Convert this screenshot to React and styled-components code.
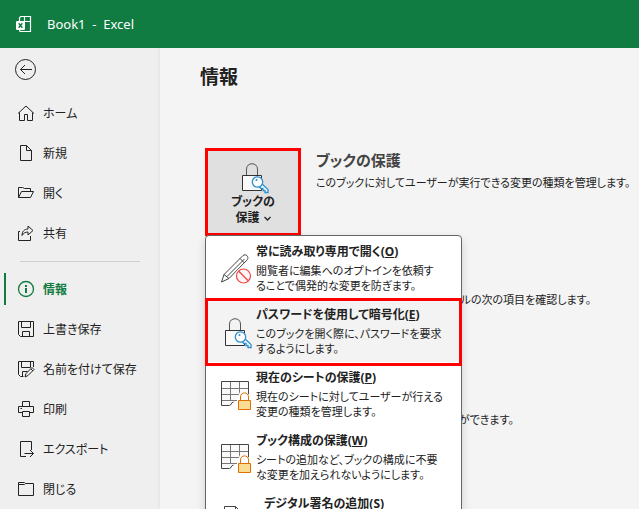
import React from 'react';
import styled, { createGlobalStyle } from 'styled-components';

const GlobalStyle = createGlobalStyle`
   body {
      margin: 0;
      font-family: "Noto Sans", "Noto Sans CJK JP", sans-serif;
      font-size: 12px;
      font-feature-settings: "palt";
      color: #222;
      background: #f4f4f4;
   }

   button {
      font: inherit;
      font-feature-settings: inherit;
      color: inherit;
      text-align: left;
      background: none;
      border: 0;
      padding: 0;
   }

   svg {
      display: block;
      flex: none;
      fill: none;
      stroke: currentColor;
   }
`;

const Page = styled.div`
   height: 100vh;
   display: flex;
   flex-direction: column;
   overflow: hidden;
`;

const TitleBar = styled.header`
   flex: none;
   height: 48px;
   display: flex;
   align-items: center;
   gap: 15px;
   padding: 0 16px;
   background: #107c41;
   color: white;
   font-size: 13px;
   white-space: pre;
`;

const Body = styled.div`
   flex: 1;
   min-height: 0;
   display: flex;
`;

const Sidebar = styled.nav`
   flex: none;
   width: 160px;
   background: #efefef;
   box-shadow: inset -3px 0 3px -2px #e2e2e2;
`;

const BackButton = styled.button`
   display: block;
   margin: 10px 0 13px 15px;
`;

const NavItem = styled.button`
   width: 100%;
   height: 40px;
   display: flex;
   align-items: center;
   gap: 8px;
   padding-left: 17px;
   position: relative;
   color: ${props => props.$active ? '#107c41' : '#222'};
   font-weight: ${props => props.$active ? 'bold' : 'normal'};

   &::before {
      content: "";
      display: ${props => props.$active ? 'block' : 'none'};
      position: absolute;
      left: 4px;
      top: 4px;
      width: 2px;
      height: 32px;
      background: #107c41;
   }
`;

const Divider = styled.hr`
   height: 1px;
   margin: 8px 20px 7px;
   border: 0;
   background: #cfcfcf;
`;

const Main = styled.main`
   flex: 1;
   min-width: 0;
   padding: 15px 12px 0 40px;
`;

const PageTitle = styled.h1`
   margin: 0 0 57px;
   font-size: 19px;
   line-height: 28px;
`;

const Section = styled.section`
   display: flex;
   gap: 15px;
   margin-left: 5px;
   min-height: ${props => props.$height};
`;

const Side = styled.div`
   flex: none;
   width: 96px;
   position: relative;
`;

const ProtectButton = styled.button`
   width: 100%;
   height: 88px;
   box-sizing: border-box;
   display: flex;
   flex-direction: column;
   align-items: center;
   padding-top: 11px;
   border: 3px solid red;
   background: #e0e0e0;
   font-weight: bold;
   line-height: 16px;
`;

const LabelLine = styled.span`
   display: flex;
   align-items: center;
   gap: 4px;
`;

const SectionTitle = styled.h2`
   margin: 0 0 1px;
   font-size: 15px;
   line-height: 24px;
   color: #444;
`;

const Text = styled.p`
   margin: 0;
   font-size: 11px;
   line-height: 20px;
   white-space: nowrap;
`;

const Menu = styled.div`
   position: absolute;
   top: 87px;
   left: 0;
   z-index: 1;
   width: 255px;
   background: white;
   border: 1px solid #666;
   border-radius: 4px;
   box-shadow: 0 4px 10px rgba(0,0,0,.15);
`;

const MenuItem = styled.button`
   width: 100%;
   height: 63px;
   display: flex;
   align-items: flex-start;
   gap: 4px;
   padding: 8px 8px 0 14px;
   position: relative;
   background: ${props => props.$marked ? '#f3f3f3' : 'transparent'};

   svg {
      margin-top: 10px;
   }

   &::after {
      content: "";
      display: ${props => props.$marked ? 'block' : 'none'};
      position: absolute;
      z-index: 1;
      inset: -1px -1px -4px;
      border: 3px solid red;
   }
`;

const MenuText = styled.span`
   display: block;
   padding-left: ${props => props.$indent ? '8px' : '0'};
   font-size: 11px;
   line-height: 15px;
   white-space: nowrap;
`;

const MenuTitle = styled.strong`
   display: block;
   font-size: 12px;
   line-height: 16px;
   margin-bottom: 3px;
`;

const Key = styled.span`
   text-decoration: underline;
`;

function ExcelLogo() {
   return (
      <svg width="16" height="16" viewBox="0 0 16 16">
         <path d="M3.500 5V1.500L5 .5h9.500v15H4l-.5-1.500V12M8.500 .5v5M3.500 5.500h11" strokeWidth="1.200" />
         <rect x="0" y="5" width="9" height="9" rx="1" fill="white" stroke="none" />
         <path d="M2.700 7.200l3.600 4.600M6.300 7.200l-3.600 4.600" stroke="#107c41" strokeWidth="1.400" />
      </svg>
   )
}

function BackIcon() {
   return (
      <svg width="22" height="22" viewBox="0 0 22 22">
         <circle cx="10.500" cy="11.500" r="10" />
         <path d="M17 11.500H5.500M10 7l-4.500 4.500L10 16" />
      </svg>
   )
}

const navPaths = {
   home: <path d="M1 9.500L9 2l8 7.500M2.500 8.500v8h5v-6h3v6h5v-8" />,
   new: <path d="M3.500 1.500h6l5 5v10h-11zM9.500 1.500v5h5" />,
   open: <path d="M1.500 13.500v-10h4l2 1h6v3M1.500 13.500l3-6h12l-3 6z" />,
   share: <path d="M3 7.500H1.500v9h12V12M5 11.500c0-4 2.500-6.500 6-6.500V2l5 4.500-5 4.500V8c-2.500 0-4.500 1-6 3.500z" />,
   info: <><circle cx="9" cy="9" r="7.500" strokeWidth="1.300" /><path d="M9 5v2M9 8v5" strokeWidth="2" /></>,
   save: <path d="M1.500 1.500h15v15h-13l-2-2zM4.500 1.500v6h9v-6M5.500 16.500v-5h7v5" />,
   saveAs: (
      <>
         <path d="M6.500 16.500h-3l-2-2v-13h15V7M4.500 1.500v6h9v-6M5.500 16.500v-5h5" />
         <path d="M8 17l1-3.500 6-6 2 2-6 6zM14 9l2 2" />
      </>
   ),
   print: <path d="M5.500 12.500h-4v-6h15v6h-4M5.500 6.500v-5h7v5M5.500 11.500h7v5h-7zM3.500 8.500h1.500" />,
   export: <path d="M9 16.500H3.500v-15h11V10M7.500 13.500h9M13 10l3.500 3.500L13 17" />,
   close: <path d="M1.500 15.500v-13h6l1 1h8v12zM1.500 4.500h6l1-1" />,
};

function NavIcon(props) {
   return (
      <svg width="18" height="18" viewBox="0 0 18 18">
         {navPaths[props.name]}
      </svg>
   )
}

function LockKeyIcon() {
   return (
      <svg width="32" height="32" viewBox="0 0 32 32">
         <path d="M9.500 13.500V7c0-7 11-7 11 0v6.500" stroke="#555" />
         <path d="M5.500 13.500h19v15h-19z" fill="#fafafa" stroke="#333" />
         <g stroke="#2b8fd0" fill="white" strokeWidth="1.300">
            <path d="M24.500 21.500l6.500 6v3h-3v-2h-2v-2h-2l-2.500-2.500" />
            <circle cx="20.500" cy="20" r="5.200" />
            <circle cx="19.500" cy="18" r="1" fill="#2b8fd0" stroke="none" />
         </g>
      </svg>
   )
}

function PencilIcon() {
   return (
      <svg width="32" height="32" viewBox="0 0 32 32">
         <path d="M1.500 28L4 20.500 23 1.500c3-2 6 1 4.500 4L9 24.500zM4 20.500l5 4M20 4.500l4.500 4.500M7 22.500L24.500 5" stroke="#444" />
         <circle cx="23.500" cy="22" r="8.500" fill="white" stroke="none" />
         <circle cx="23.500" cy="22" r="7" fill="#fff5f5" stroke="#f04545" strokeWidth="1.200" />
         <path d="M18.500 17l10 10" stroke="#f04545" strokeWidth="1.200" />
      </svg>
   )
}

function SheetLockIcon() {
   return (
      <svg width="32" height="32" viewBox="0 0 32 32">
         <path d="M1.500 1.500h27v17l-15 3-3 3.500h-9z" fill="#fafafa" stroke="none" />
         <path d="M10.500 1.500v19M19.500 1.500v19M1.500 8.500h27M1.500 14.500h27M1.500 20.500h18" stroke="#777" />
         <path d="M28.500 14V1.500h-27v24h8c2 0 1-3 4-3.500" stroke="#444" />
         <path d="M17 30V19l3-7h7l4 7v11z" fill="white" stroke="none" />
         <path d="M20.500 20.500V17c0-5.500 8-5.500 8 0v3.500" stroke="#e07000" />
         <path d="M18.500 20.500h12v9h-12z" fill="#fbdc93" stroke="#e07000" />
      </svg>
   )
}

function SignatureIcon() {
   return (
      <svg width="32" height="32" viewBox="0 0 32 32">
         <path d="M4.500 31V.5h11l6 6V31M15.500 .5v6h6" stroke="#444" />
      </svg>
   )
}

function Chevron() {
   return (
      <svg width="7" height="5" viewBox="0 0 7 5">
         <path d="M.5 1l3 3 3-3" strokeWidth="1.300" />
      </svg>
   )
}

const fileItems = [
   { icon: 'home', label: 'ホーム' },
   { icon: 'new', label: '新規' },
   { icon: 'open', label: '開く' },
   { icon: 'share', label: '共有' },
];

const bookItems = [
   { icon: 'info', label: '情報', active: true },
   { icon: 'save', label: '上書き保存' },
   { icon: 'saveAs', label: '名前を付けて保存' },
   { icon: 'print', label: '印刷' },
   { icon: 'export', label: 'エクスポート' },
   { icon: 'close', label: '閉じる' },
];

const menuItems = [
   { icon: PencilIcon, title: '常に読み取り専用で開く', accessKey: 'O', lines: ['閲覧者に編集へのオプトインを依頼す', 'ることで偶発的な変更を防ぎます。'] },
   { icon: LockKeyIcon, title: 'パスワードを使用して暗号化', accessKey: 'E', lines: ['このブックを開く際に、パスワードを要求', 'するようにします。'], marked: true },
   { icon: SheetLockIcon, title: '現在のシートの保護', accessKey: 'P', lines: ['現在のシートに対してユーザーが行える', '変更の種類を管理します。'] },
   { icon: SheetLockIcon, title: 'ブック構成の保護', accessKey: 'W', lines: ['シートの追加など、ブックの構成に不要', 'な変更を加えられないようにします。'] },
   { icon: SignatureIcon, title: 'デジタル署名の追加', accessKey: 'S', lines: [], indent: true },
];

function NavList(props) {
   return props.items.map(item => (
      <NavItem key={item.icon} type="button" $active={item.active}>
         <NavIcon name={item.icon} />
         {item.label}
      </NavItem>
   ))
}

function ProtectMenu() {
   return (
      <Menu role="menu">
         {menuItems.map(item => (
            <MenuItem key={item.accessKey} type="button" role="menuitem" $marked={item.marked}>
               <item.icon />
               <MenuText $indent={item.indent}>
                  <MenuTitle>{item.title}(<Key>{item.accessKey}</Key>)</MenuTitle>
                  {item.lines.map(line => <div key={line}>{line}</div>)}
               </MenuText>
            </MenuItem>
         ))}
      </Menu>
   )
}

function App() {
   return (
      <Page>
         <GlobalStyle />
         <TitleBar>
            <ExcelLogo />
            <span>{'Book1  -  Excel'}</span>
         </TitleBar>
         <Body>
            <Sidebar>
               <BackButton type="button" aria-label="戻る"><BackIcon /></BackButton>
               <NavList items={fileItems} />
               <Divider />
               <NavList items={bookItems} />
            </Sidebar>
            <Main>
               <PageTitle>情報</PageTitle>
               <Section $height="142px">
                  <Side>
                     <ProtectButton type="button" aria-haspopup="menu">
                        <LockKeyIcon />
                        <span>ブックの</span>
                        <LabelLine>保護 <Chevron /></LabelLine>
                     </ProtectButton>
                     <ProtectMenu />
                  </Side>
                  <div>
                     <SectionTitle>ブックの保護</SectionTitle>
                     <Text>このブックに対してユーザーが実行できる変更の種類を管理します。</Text>
                  </div>
               </Section>
               <Section $height="120px">
                  <Side />
                  <div>
                     <Text>ファイルを公開する前に、ファイルの次の項目を確認します。</Text>
                     <Text>ドキュメントのプロパティ、作者.</Text>
                  </div>
               </Section>
               <Section>
                  <Side />
                  <div>
                     <Text>過去バージョンを確認することができます。</Text>
                  </div>
               </Section>
            </Main>
         </Body>
      </Page>
   )
}

export default App
